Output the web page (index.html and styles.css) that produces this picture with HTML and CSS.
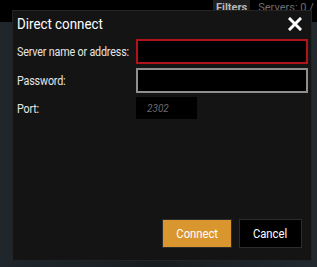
FILE: index.html
```html
<!DOCTYPE html>
<html lang="en">
	<head>
		<meta charset="utf-8">
		<title>Direct connect</title>
		<link rel="stylesheet" href="styles.css">
	</head>
	<body>

		<div id="topbar">
			<div class="tab active">Filters</div>
			<div class="tab">Servers: 0 /</div>
		</div>
		<div id="backdrop"></div>

		<div id="dialog">

			<div class="header">
				<div class="title"><span>Direct connect</span></div>
				<svg class="close" width="14" height="14" viewBox="0 0 14 14">
					<path d="M2 2 L12 12 M12 2 L2 12" stroke="#ffffff" stroke-width="3" stroke-linecap="square"/>
				</svg>
			</div>

			<div class="row">
				<div class="label"><span>Server name or address:</span></div>
				<div class="field error"></div>
			</div>

			<div class="row">
				<div class="label"><span>Password:</span></div>
				<div class="field"></div>
			</div>

			<div class="row port">
				<div class="label"><span>Port:</span></div>
				<div class="field small">2302</div>
			</div>

			<div class="buttons">
				<button class="connect"><span>Connect</span></button>
				<button class="cancel"><span>Cancel</span></button>
			</div>

		</div>

	</body>
</html>
```

FILE: styles.css
```css
html, body {
	margin: 0;
	width: 100%;
	height: 100%;
	font-family: Roboto, "Liberation Sans", sans-serif;
	overflow: hidden;
}

body {
	background: #1b2226;
}

#topbar {
	height: 22px;
	background: #000000;
	display: flex;
	padding-left: 213px;
	gap: 5px;
}

#topbar .tab {
	height: 12px;
	padding: 1px 3px 0;
	font-size: 11px;
	line-height: 14px;
	color: #6e6e6e;
	white-space: nowrap;
}

#topbar .tab.active {
	background: #1e1e1e;
	color: #b8b8b8;
	font-weight: bold;
}

#backdrop {
	height: 245px;
	background: linear-gradient(90deg, #1f272c, #171c20 50%, #222a2f);
}

#dialog {
	position: absolute;
	left: 12px;
	top: 10px;
	width: 298px;
	height: 249px;
	background: #141414;
	border: 1px solid #242424;
	display: flex;
	flex-direction: column;
}

.header {
	height: 26px;
	padding: 0 8px 0 4px;
	display: flex;
	align-items: center;
	justify-content: space-between;
}

.title {
	color: #ffffff;
	font-size: 15.5px;
	white-space: nowrap;
}

.title span,
.label span,
.buttons span {
	display: inline-block;
	transform: scaleX(0.86);
	transform-origin: left center;
}

.buttons span {
	transform-origin: center;
	transform: scaleX(0.9);
}

.close {
	margin-right: 1px;
}

.row {
	display: flex;
	align-items: center;
	height: 29px;
	padding: 0 3px 0 4px;
}

.label {
	width: 119px;
	color: #e6e6e6;
	font-size: 12.5px;
	letter-spacing: -0.2px;
	white-space: nowrap;
}

.field {
	flex: 1;
	height: 21px;
	background: #000000;
	border: 2px solid #8f8f8f;
}

.field.error {
	border-color: #b0141a;
}

.row.port {
	height: 26px;
}

.field.small {
	flex: none;
	width: 50px;
	height: 22px;
	border: none;
	padding-left: 11px;
	font-size: 10px;
	font-style: italic;
	line-height: 24px;
	color: #6a6a6a;
}

.buttons {
	margin-top: auto;
	display: flex;
	justify-content: flex-end;
	gap: 7px;
	padding: 0 9px 12px 0;
}

.buttons button {
	height: 29px;
	font-family: Roboto, "Liberation Sans", sans-serif;
	font-size: 12.5px;
	color: #ffffff;
	border: 1px solid #2c2c2c;
	cursor: pointer;
}

.connect {
	width: 70px;
	background: #d9962e;
	color: #fff3e0;
	border-color: #c28426;
}

.cancel {
	width: 63px;
	background: #000000;
}
```
